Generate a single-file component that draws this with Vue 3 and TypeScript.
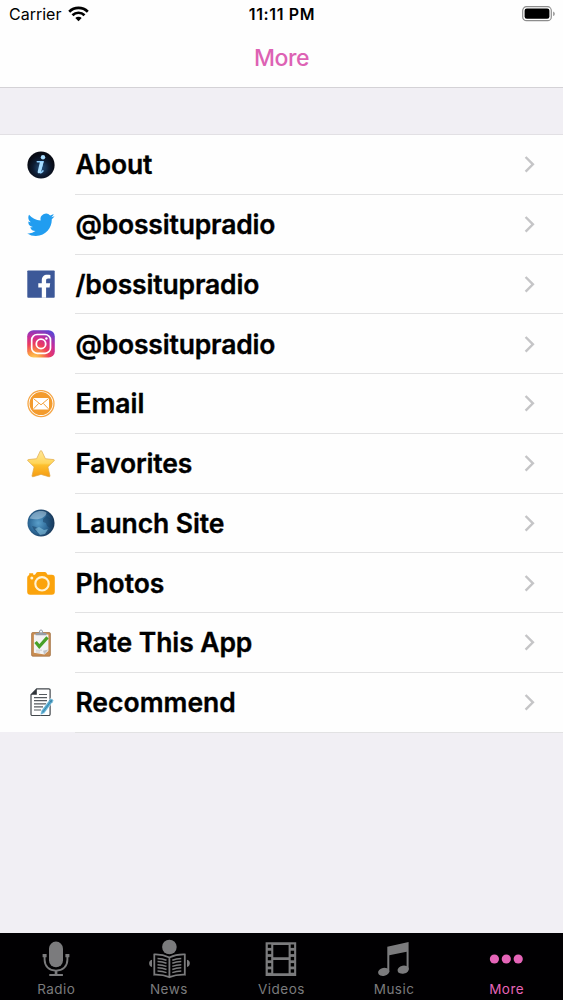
<script setup lang="ts">
import { ref } from 'vue'

interface MenuItem {
  icon: string
  label: string
  width: number
}

interface Tab {
  icon: string
  label: string
}

// width: rendered label width in px
const items: MenuItem[] = [
  { icon: 'info', label: 'About', width: 77 },
  { icon: 'twitter', label: '@bossitupradio', width: 200 },
  { icon: 'facebook', label: '/bossitupradio', width: 184 },
  { icon: 'instagram', label: '@bossitupradio', width: 200 },
  { icon: 'email', label: 'Email', width: 69 },
  { icon: 'star', label: 'Favorites', width: 117 },
  { icon: 'globe', label: 'Launch Site', width: 149 },
  { icon: 'camera', label: 'Photos', width: 89 },
  { icon: 'rate', label: 'Rate This App', width: 177 },
  { icon: 'recommend', label: 'Recommend', width: 160.5 },
]

const tabs: Tab[] = [
  { icon: 'radio', label: 'Radio' },
  { icon: 'news', label: 'News' },
  { icon: 'videos', label: 'Videos' },
  { icon: 'music', label: 'Music' },
  { icon: 'more', label: 'More' },
]

const activeTab = ref('More')
const filmHoles = [8.5, 14.7, 20.9, 27.1, 33.3]
</script>

<template>
  <div class="screen">
    <header class="top">
      <div class="status">
        <div class="carrier">
          <span>Carrier</span>
          <svg class="wifi" width="21" height="16" viewBox="0 0 21 16" fill="none" stroke="#000" stroke-width="2.7">
            <path d="M1.2 5.7a13.4 13.4 0 0 1 18.6 0" />
            <path d="M4.5 9.2a8.6 8.6 0 0 1 12 0" />
            <path d="M7.3 12.1a4.6 4.6 0 0 1 6.4 0L10.5 15.3z" fill="#000" stroke="none" />
          </svg>
        </div>
        <span class="time">11:11 PM</span>
        <svg class="battery" width="34" height="16" viewBox="0 0 34 16">
          <rect x="0.7" y="0.7" width="28.6" height="14" rx="3.8" fill="none" stroke="#8d8d8d" stroke-width="1.2" />
          <rect x="2.6" y="2.6" width="24.8" height="10.2" rx="2.2" fill="#000" />
          <path d="M31.2 5.4C33.2 6.2 33.2 9.2 31.2 10z" fill="#8d8d8d" />
        </svg>
      </div>
      <h1 class="title">More</h1>
    </header>

    <main class="list">
      <div v-for="(item, i) in items" :key="i" class="row">
        <svg class="icon" width="28" height="28" viewBox="0 0 28 28">
          <g v-if="item.icon === 'info'">
            <defs>
              <radialGradient id="infoBg" cy=".6">
                <stop offset="0" stop-color="#24517f" />
                <stop offset=".6" stop-color="#0d1b31" />
                <stop offset="1" stop-color="#080b14" />
              </radialGradient>
            </defs>
            <circle cx="14" cy="14" r="13.6" fill="url(#infoBg)" />
            <circle cx="16" cy="6.2" r="2.2" fill="#a9ddff" />
            <path d="M10.3 10.8h5.6l-2.7 9.8c-.3 1.6 1.2 1.3 2.7-.7" fill="none" stroke="#8fd0ff" stroke-width="1.6" stroke-linecap="round" />
            <path d="M12.9 11h3.5l-2.7 10.3c-1 1.9-3.5 1-3-.9z" fill="#a9ddff" />
          </g>
          <path
            v-else-if="item.icon === 'twitter'"
            transform="translate(.2 .1) scale(1.14)"
            fill="#219df0"
            d="M23.95 4.57a10 10 0 0 1-2.82.77 4.96 4.96 0 0 0 2.16-2.72c-.95.55-2 .95-3.13 1.18a4.92 4.92 0 0 0-8.38 4.48C7.69 8.09 4.07 6.13 1.64 3.16a4.82 4.82 0 0 0-.67 2.48c0 1.71.87 3.21 2.19 4.1a4.9 4.9 0 0 1-2.23-.62v.06a4.92 4.92 0 0 0 3.95 4.83 5 5 0 0 1-2.21.08 4.94 4.94 0 0 0 4.6 3.42A9.87 9.87 0 0 1 0 19.54a13.99 13.99 0 0 0 7.55 2.21c9.05 0 14-7.5 14-13.99 0-.21 0-.42-.02-.63a9.94 9.94 0 0 0 2.46-2.55z"
          />
          <g v-else-if="item.icon === 'facebook'">
            <rect x=".3" y=".5" width="27.4" height="27.2" rx=".8" fill="#3c5898" />
            <path d="M14.8 27.7V17.4h-3.5v-4.1h3.5v-3c0-3.6 2.1-5.6 5.4-5.6 1.5 0 2.6.1 3.2.2v3.7h-2.2c-1.7 0-2.1.9-2.1 2.1v2.6h4.1l-.6 4.1h-3.5v10.3z" fill="#fff" />
          </g>
          <g v-else-if="item.icon === 'instagram'">
            <defs>
              <radialGradient id="insta" cx=".25" cy="1.05" r="1.15">
                <stop offset="0" stop-color="#ffd75f" />
                <stop offset=".22" stop-color="#fb9b42" />
                <stop offset=".48" stop-color="#ed3d5c" />
                <stop offset=".72" stop-color="#c72c9c" />
                <stop offset="1" stop-color="#5d44d2" />
              </radialGradient>
            </defs>
            <rect x=".2" y=".2" width="27.6" height="27.4" rx="6.2" fill="url(#insta)" />
            <rect x="4.7" y="4.5" width="18.8" height="18.8" rx="5.4" fill="none" stroke="#fff" stroke-width="1.7" />
            <circle cx="14" cy="13.9" r="4.7" fill="none" stroke="#fff" stroke-width="1.8" />
            <circle cx="19.4" cy="8.5" r="1.2" fill="#fff" />
          </g>
          <g v-else-if="item.icon === 'email'">
            <circle cx="14" cy="13.6" r="13" fill="#fff" stroke="#f5a544" stroke-width="1.3" />
            <circle cx="14" cy="13.6" r="11.5" fill="#f39b2d" />
            <rect x="6" y="8.1" width="16" height="11.3" rx="1" fill="#fff" />
            <path d="M6.5 8.6l7.5 6.2 7.5-6.2M6.5 18.9l5.2-5.5M21.5 18.9l-5.2-5.5" fill="none" stroke="#f3a039" stroke-width="1" />
          </g>
          <g v-else-if="item.icon === 'star'">
            <defs>
              <linearGradient id="starFill" x2="0" y2="1">
                <stop offset="0" stop-color="#ffe79a" />
                <stop offset=".48" stop-color="#ffd65a" />
                <stop offset=".55" stop-color="#fdc02e" />
                <stop offset="1" stop-color="#f59b12" />
              </linearGradient>
            </defs>
            <path d="M14 .6q.5 0 .8.6l3.6 7.5 8.4.9q1.1.3.3 1.2l-6.2 6.1 2.1 8.9q0 1.4-1.2.9L14 24.4l-7.8 2.3q-1.2.5-1.2-.9l2.1-8.9-6.2-6.1q-.8-.9.3-1.2l8.4-.9 3.6-7.5q.3-.6.8-.6z" fill="url(#starFill)" stroke="#e0a94a" stroke-width=".7" stroke-linejoin="round" />
          </g>
          <g v-else-if="item.icon === 'globe'">
            <defs>
              <radialGradient id="globeBg" cx=".4" cy=".5" r=".62">
                <stop offset="0" stop-color="#5ba0cb" />
                <stop offset=".55" stop-color="#2e6a99" />
                <stop offset="1" stop-color="#15304f" />
              </radialGradient>
            </defs>
            <circle cx="14" cy="14" r="13.5" fill="url(#globeBg)" />
            <path d="M2.6 9.5C6 2.2 14 .5 19.5 3.5c0 5-8 8.5-16.9 6z" fill="#b4d0e2" opacity=".55" />
            <path d="M16 10l4-3 4 3 2 5-3 4-3-2-1-3-3-1zM5 17l4 1 2 2-1 3-3-2z" fill="#173e62" opacity=".5" />
            <path d="M8 20l4-2 5 3 4-1-3 5-5 1z" fill="#8bc4df" opacity=".6" />
          </g>
          <g v-else-if="item.icon === 'camera'">
            <path d="M8 5.7l1.5-2.2c.3-.4.7-.6 1.2-.6h7.2c.5 0 .9.2 1.2.6l1.5 2.2h4.2a3 3 0 0 1 3 3v14.1a3 3 0 0 1-3 3H3.2a3 3 0 0 1-3-3V8.7a3 3 0 0 1 2-2.8V4.2h4v1.5z" fill="#fba30c" />
            <circle cx="15" cy="14.8" r="6.7" fill="none" stroke="#fff3d6" stroke-width="2.1" />
            <circle cx="4.8" cy="8.9" r="1.5" fill="#fff3d6" />
          </g>
          <g v-else-if="item.icon === 'rate'">
            <rect x="4.6" y="3.5" width="18.8" height="23.7" rx="1.2" fill="#c88c51" stroke="#9e6c3d" stroke-width=".7" />
            <path d="M6.9 5.6h14.5v16.5l-4 3.3-10.5-1.6z" fill="#f3f3f4" />
            <path d="M21.4 20.5l-4.3 4.9-1-3.6z" fill="#bfc2c6" />
            <path d="M8.6 6.2V3.9h3.2c0-4.7 4.4-4.7 4.4 0h3.2v2.3z" fill="#969da7" />
            <circle cx="14" cy="2.5" r="1" fill="#fff" />
            <path d="M8.6 12.9l3.7 4.7 8.2-9.2" fill="none" stroke="#48a127" stroke-width="3.2" />
            <path d="M9 21.2h6M9 23h4" stroke="#c7c9cc" stroke-width=".8" />
          </g>
          <g v-else>
            <path d="M9.7.9h12.2a1.2 1.2 0 0 1 1.2 1.2v24.2a1.2 1.2 0 0 1-1.2 1.2H5.2A1.2 1.2 0 0 1 4 26.3V6.7z" fill="#fff" stroke="#42474c" stroke-width="1.2" />
            <path d="M9.8.7v6H3.8z" fill="#30353a" />
            <path d="M12 6.5h8M7 9.6h13M7 12.7h13M7 15.8h12M7 18.9h9M7 22h7" stroke="#555a5f" stroke-width="1.2" />
            <path d="M23.6 10.3l3.2 2.3-9.4 12.6-4 1.9.8-4.3z" fill="#5badd2" stroke="#fff" stroke-width=".5" />
            <path d="M25.2 11.5l-9.5 12.7M22.2 12.1l3.2 2.3" stroke="#2e7599" stroke-width=".7" />
          </g>
        </svg>
        <div class="cell">
          <svg class="label" :width="item.width + 4" height="36">
            <text x="0.4" y="28.1" :textLength="item.width" lengthAdjust="spacing">{{ item.label }}</text>
          </svg>
          <svg class="chevron" width="12" height="20" viewBox="0 0 12 20">
            <path d="M1.6 3l7.3 7.3-7.3 7.3" fill="none" stroke="#c5c5c7" stroke-width="2.4" />
          </svg>
        </div>
      </div>
    </main>

    <nav class="tabs">
      <button
        v-for="tab in tabs"
        :key="tab.label"
        :class="['tab', { active: activeTab === tab.label }]"
        @click="activeTab = tab.label"
      >
        <svg width="44" height="44" viewBox="0 0 44 44" fill="currentColor">
          <g v-if="tab.icon === 'radio'">
            <rect x="15" y="5.6" width="14" height="25.7" rx="7" />
            <path d="M10.6 19.5v4.3c0 6.3 4.5 10.8 11.4 10.8s11.4-4.5 11.4-10.8v-4.3" fill="none" stroke="currentColor" stroke-width="1.9" />
            <path d="M8.6 18h4v3.3h-4zM31.4 18h4v3.3h-4zM20.7 34.5h2.7v4h-2.7zM15.3 37.9h13.6v2.2H15.3z" />
          </g>
          <g v-else-if="tab.icon === 'news'">
            <circle cx="22.4" cy="11" r="7.3" />
            <path d="M7.3 18.5c5.3-.2 10.5.8 15.1 3 4.6-2.2 9.8-3.2 15.4-3v20.2c-5.5-.2-10.6.5-15.4 2.5-4.7-2-9.8-2.7-15.1-2.5zM22.4 21.5V41" fill="none" stroke="currentColor" stroke-width="1.8" />
            <path d="M10.5 22.5q5 .1 9 1.7M10.5 25.6q5 .1 9 1.7M10.5 28.7q5 .1 9 1.7M10.5 31.8q5 .1 9 1.7M10.5 34.9q5 .1 9 1.7M25.3 24.2q4-1.6 9-1.7M25.3 27.3q4-1.6 9-1.7M25.3 30.4q4-1.6 9-1.7M25.3 33.5q4-1.6 9-1.7M25.3 36.6q4-1.6 9-1.7" fill="none" stroke="currentColor" stroke-width="1.5" />
            <path d="M5 23.8c-3.8.5-3.8 6.6 0 7.2zM40 23.8c3.8.5 3.8 6.6 0 7.2z" />
          </g>
          <g v-else-if="tab.icon === 'videos'">
            <path fill-rule="evenodd" d="M6.6 6.2h30.6V40H6.6zM14.3 9v12.3h15.3V9zM14.3 24v13.3h15.3V24z" />
            <template v-for="y in filmHoles" :key="y">
              <rect x="8.8" :y="y" width="3.4" height="3.4" fill="#000" />
              <rect x="31.7" :y="y" width="3.4" height="3.4" fill="#000" />
            </template>
          </g>
          <g v-else-if="tab.icon === 'music'">
            <path d="M15.3 10.8L36.6 6v27.5h-2V15.7l-17.3 3.5V36h-2z" />
            <ellipse cx="11.7" cy="35.9" rx="5.7" ry="4" transform="rotate(-12 11.7 35.9)" />
            <ellipse cx="31.2" cy="33.7" rx="5.7" ry="4" transform="rotate(-12 31.2 33.7)" />
          </g>
          <g v-else>
            <circle cx="9.4" cy="23" r="4.6" />
            <circle cx="21.3" cy="23" r="4.6" />
            <circle cx="33.2" cy="23" r="4.6" />
          </g>
        </svg>
        <span>{{ tab.label }}</span>
      </button>
    </nav>
  </div>
</template>

<style>
body {
  background: #f1eff4;
}
</style>

<style scoped>
.screen {
  display: flex;
  flex-direction: column;
  width: 563px;
  height: 1000px;
  overflow: hidden;
  background: #f1eff4;
  font-family: Inter, "Liberation Sans", sans-serif;
}
.top {
  box-sizing: border-box;
  height: 88px;
  background: #fefefe;
  border-bottom: 1px solid #d4d2d6;
}
.status {
  box-sizing: border-box;
  display: grid;
  grid-template-columns: 1fr auto 1fr;
  align-items: center;
  height: 28px;
  padding: 0 7px 0 9px;
  font-size: 16px;
}
.carrier {
  display: flex;
  align-items: center;
  gap: 7px;
}
.time {
  font-weight: 600;
  letter-spacing: 0.65px;
  margin-right: 1px;
}
.battery {
  justify-self: end;
}
.title {
  margin: 0;
  height: 59px;
  line-height: 60px;
  text-align: center;
  font-size: 23px;
  font-weight: 500;
  letter-spacing: -0.5px;
  color: #dd62b4;
}
.list {
  margin-top: 46px;
  border-top: 1px solid #e2e0e4;
  background: #fefefe;
}
.row {
  display: flex;
  align-items: center;
  height: 59.75px;
  padding-left: 27px;
}
/* the last separator sits just below the white area */
.row:last-child {
  height: 58.75px;
}
.icon {
  flex: none;
}
.cell {
  box-sizing: border-box;
  flex: 1;
  align-self: flex-start;
  display: flex;
  align-items: center;
  justify-content: space-between;
  height: 59.75px;
  margin-left: 20px;
  padding-right: 27px;
  border-bottom: 1px solid #e2e2e3;
}
.label {
  overflow: visible;
  font-size: 26.5px;
  font-weight: 600;
  stroke: #000;
  stroke-width: 0.35px;
}
.tabs {
  display: grid;
  grid-template-columns: repeat(5, 1fr);
  height: 67px;
  margin-top: auto;
  background: #010002;
}
.tab {
  display: flex;
  flex-direction: column;
  align-items: center;
  padding: 3px 0 0;
  border: 0;
  background: none;
  color: #7b7b7d;
  font: 400 13.5px/18px Inter, "Liberation Sans", sans-serif;
  letter-spacing: 0.5px;
}
.tab.active {
  color: #e565b8;
}
</style>
